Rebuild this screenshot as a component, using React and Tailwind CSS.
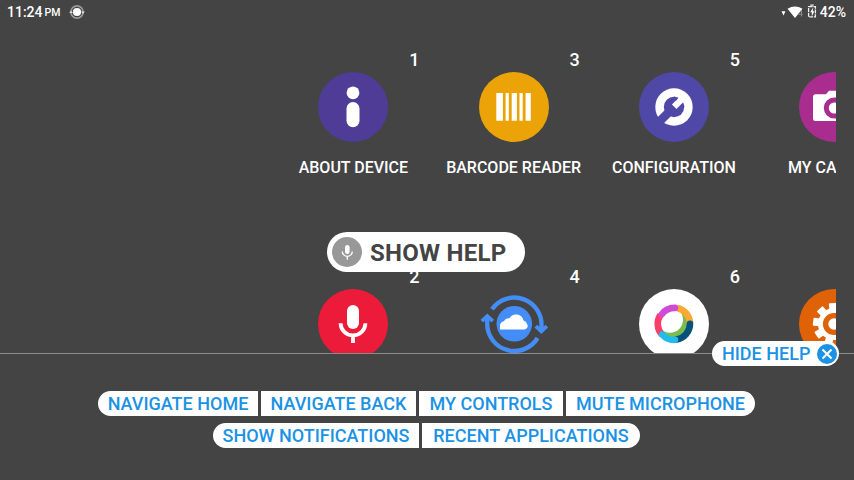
function Disc({ className, children }) {
  return (
    <svg viewBox="0 0 70 70" className="h-[70px] w-[70px] shrink-0">
      <circle cx="35" cy="35" r="35" className={className} />
      {children}
    </svg>
  );
}

const InfoIcon = () => (
  <Disc className="fill-[#4f3c96]">
    <circle cx="35" cy="20.8" r="6.4" fill="#fff" />
    <rect x="28.5" y="30" width="13" height="25.2" rx="6.5" fill="#fff" />
  </Disc>
);

const BarcodeIcon = () => (
  <Disc className="fill-[#eba307]">
    <path d="M17.3 21h6.6v27.8h-6.600zM26.600 21h3.200v27.800h-3.200zM32.700 21h5.200v27.800h-5.200zM40.500 21h3.200v27.800h-3.200zM46.600 21h5.200v27.800h-5.200z" fill="#fff" />
  </Disc>
);

const WrenchIcon = () => (
  <Disc className="fill-[#5048a6]">
    <circle cx="35" cy="35" r="18.7" fill="#fff" />
    <circle cx="35" cy="35" r="10.2" fill="#5048a6" />
    <path d="M34 36 18 52" stroke="#5048a6" strokeWidth="8.8" />
    <path d="M35.2 34.8 45 25" stroke="#fff" strokeWidth="6.4" />
    <path d="m35.800 26.200.9.700M43.200 33.400l.7.800" stroke="#5048a6" strokeWidth="3" strokeLinecap="round" />
  </Disc>
);

const CameraIcon = () => (
  <Disc className="fill-[#a82d8f]">
    <path d="M16.500 22.300h10.500l3-3.600h11l3 3.600H54a2.500 2.500 0 0 1 2.500 2.500v21.700A2.500 2.500 0 0 1 54 49H16.500a2.500 2.500 0 0 1-2.500-2.500V24.800a2.500 2.500 0 0 1 2.500-2.500z" fill="#fff" />
    <circle cx="35.300" cy="36" r="8" fill="none" stroke="#a82d8f" strokeWidth="5" />
  </Disc>
);

const MicIcon = () => (
  <Disc className="fill-[#ed1b3a]">
    <rect x="29" y="16" width="12" height="24" rx="6" fill="#fff" />
    <path d="M22.6 34.2a12.4 12.2 0 0 0 24.8 0M35 46v8" fill="none" stroke="#fff" strokeWidth="3.8" />
  </Disc>
);

const CloudSyncIcon = () => (
  <Disc className="fill-transparent">
    <circle cx="35.3" cy="34.8" r="17.8" fill="#448df6" />
    <path d="M24.5 40.5h21a3.4 3.4 0 0 0 2.6-5.3 4.6 4.6 0 0 0-3.6-3.6 7.6 7.6 0 0 0-14-2.4 5.6 5.6 0 0 0-5.6 3 4.7 4.7 0 0 0-3.9 5.2v3.1z" fill="#fff" />
    <g fill="none" stroke="#448df6" strokeWidth="4.4">
      <path d="M13 20.200A27.200 27.200 0 0 1 62.300 39v3M58.600 49A27.200 27.200 0 0 1 8.200 34.800V28" />
      <path d="m56.800 37.200 5.500 5.200 5.500-5.200M2.800 32.200l5.500-5.200 5.500 5.200" strokeWidth="3.8" />
    </g>
  </Disc>
);

const MeetingIcon = () => (
  <Disc className="fill-white">
    <clipPath id="ring-inside">
      <circle cx="35" cy="34.8" r="13.5" />
    </clipPath>
    <g clipPath="url(#ring-inside)">
      <circle cx="35" cy="34.8" r="13.5" fill="#77bd4e" />
      <circle cx="31" cy="30.8" r="13" fill="#fff" />
    </g>
    <g fill="none" strokeWidth="6.6">
      <path d="M21.5 25.8a16 16 0 0 0 1.6 20" stroke="#fb3d69" />
      <path d="M38 19a16 16 0 0 1 13 15" stroke="#faa932" />
      <path d="M22.8 25.2A16 16 0 0 1 36 18.9" stroke="#cf4bd6" strokeLinecap="round" />
      <path d="M51 34.8a16 16 0 0 1-13.5 15.8" stroke="#06527a" strokeLinecap="round" />
      <path d="M23.2 45.6A16 16 0 0 0 36 50.8" stroke="#21bce9" strokeLinecap="round" />
    </g>
  </Disc>
);

const TEETH = [187, 227, 267, 307, 347, 27, 67, 107, 147];

const GearIcon = () => (
  <Disc className="fill-[#df6206]">
    {TEETH.map((angle) => (
      <path key={angle} d="M48 31.2l7-.3q1 0 1 1v6q0 1-1 1l-7-.3z" fill="#fff" transform={`rotate(${angle} 35 35)`} />
    ))}
    <circle cx="35" cy="35" r="16" fill="#fff" />
    <circle cx="35" cy="35" r="8.4" fill="none" stroke="#df6206" strokeWidth="5.4" />
  </Disc>
);

const ROWS = [
  [
    { n: "1", label: "ABOUT DEVICE", Icon: InfoIcon },
    { n: "3", label: "BARCODE READER", Icon: BarcodeIcon },
    { n: "5", label: "CONFIGURATION", Icon: WrenchIcon },
    { n: "", label: "MY CAMERA", Icon: CameraIcon },
  ],
  [
    { n: "2", label: "", Icon: MicIcon },
    { n: "4", label: "", Icon: CloudSyncIcon },
    { n: "6", label: "", Icon: MeetingIcon },
    { n: "", label: "", Icon: GearIcon },
  ],
];

function Tile({ n, label, Icon }) {
  return (
    <div className="flex h-[217px] w-[160.3px] shrink-0 flex-col items-center">
      <div className="h-6 self-end pr-[14px] text-[18px] leading-6">{n}</div>
      <Icon />
      <div className="mt-[14px] text-[16px] leading-[23px] whitespace-nowrap">{label}</div>
    </div>
  );
}

function Chips({ items, className }) {
  return (
    <div className={`flex gap-[3px] ${className}`}>
      {items.map(([text, width]) => (
        <div key={text} className={`flex h-[25px] items-center justify-center bg-white text-[18px] leading-[25px] whitespace-nowrap first:rounded-l-full last:rounded-r-full ${width}`}>
          {text}
        </div>
      ))}
    </div>
  );
}

export default function App() {
  return (
    <div className="relative flex h-[480px] w-[854px] flex-col overflow-hidden bg-[#444] font-['Roboto',sans-serif] font-medium text-white">
      <header className="flex h-6 shrink-0 items-center justify-between pr-2 pl-[7px] text-[14px]">
        <div className="flex items-center">
          <span>11:24</span>
          <span className="ml-[2px] pt-[2px] text-[10.5px]">PM</span>
          <svg viewBox="0 0 16 16" className="ml-[9px] h-4 w-4">
            <circle cx="8" cy="8" r="6.1" fill="none" stroke="#999" strokeWidth="1.600" />
            <circle cx="8" cy="8" r="4.1" fill="#fff" />
            <path d="M.2 9 2 6.500 4 9zM15.800 7.500 14 10l-2-2.500z" fill="#ddd" />
          </svg>
        </div>
        <div className="flex items-center">
          <svg viewBox="0 0 36 16" className="mr-[3px] h-4 w-9">
            <path d="M.5 7.200h4L2.500 11.500z" fill="#fff" />
            <path d="M6.500 4.800Q14 .4 21.500 4.800L14 14z" fill="#fff" />
            <path d="M20.500 6v6.500M20.300 6.500l-3 3.800h4.500" fill="none" stroke="#888" strokeWidth="1" />
            <path d="M29.300 1.200h3.400M27.600 2.700h6.800v10.200h-6.800z" fill="none" stroke="#eee" strokeWidth="1.300" strokeDasharray="4 .8" />
            <path d="m32.200 3.500-3 4.700h1.600V12.500l2.600-5.200h-1.600z" fill="#fff" />
          </svg>
          <span>42%</span>
        </div>
      </header>

      <main className="mr-[18px] h-[329px] shrink-0 overflow-hidden pt-6 pl-[273.2px]">
        {ROWS.map((row) => (
          <div key={row[0].n} className="flex">
            {row.map((tile, i) => (
              <Tile key={i} {...tile} />
            ))}
          </div>
        ))}
      </main>

      <footer className="flex flex-1 flex-col items-start border-t border-[#8a8a8a] pt-[37px] text-[#1b92e4]">
        <Chips
          className="pl-[98px]"
          items={[
            ["NAVIGATE HOME", "w-[160px]"],
            ["NAVIGATE BACK", "w-[155px]"],
            ["MY CONTROLS", "w-[144px]"],
            ["MUTE MICROPHONE", "w-[189px]"],
          ]}
        />
        <Chips
          className="mt-[7px] pl-[213px]"
          items={[
            ["SHOW NOTIFICATIONS", "w-[206px]"],
            ["RECENT APPLICATIONS", "w-[218px]"],
          ]}
        />
      </footer>

      <button className="absolute top-[232px] left-[327px] flex h-10 w-[198px] items-center rounded-full bg-white pl-[5px] text-[24px] font-bold tracking-[0.25px] whitespace-nowrap text-[#444]">
        <svg viewBox="0 0 30 30" className="mr-2 h-[30px] w-[30px] shrink-0">
          <circle cx="15" cy="15" r="15" fill="#989898" />
          <rect x="13" y="8" width="4.600" height="9" rx="2.300" fill="#fff" />
          <path d="M10.300 14.500a5 4.800 0 0 0 10 0M15.300 19.300v3.400" fill="none" stroke="#fff" strokeWidth="1.300" />
        </svg>
        <span className="pt-[2px]">SHOW HELP</span>
      </button>

      <button className="absolute top-[341px] left-[712px] flex h-[25px] w-[127px] items-center rounded-full bg-white pl-[10px] text-[18px] leading-[25px] whitespace-nowrap text-[#1b92e4]">
        HIDE HELP
        <svg viewBox="0 0 20 20" className="ml-auto mr-[2px] h-5 w-5 shrink-0">
          <circle cx="10" cy="10" r="10" fill="#1b92e4" />
          <path d="m5.500 5.500 9 9m0-9-9 9" stroke="#fff" strokeWidth="2" />
        </svg>
      </button>
    </div>
  );
}
